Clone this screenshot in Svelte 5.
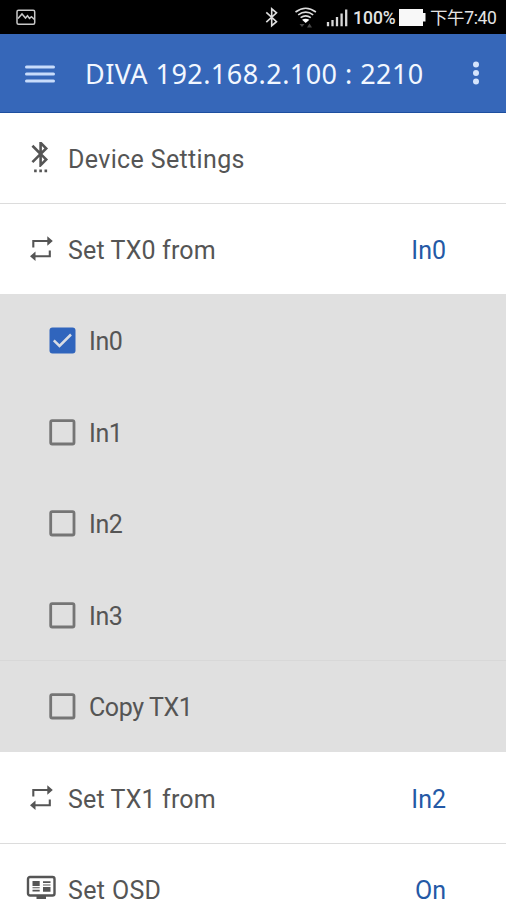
<script lang="ts">
    let title = 'DIVA 192.168.2.100 : 2210';
    let source = 'In0';

    const options = ['In0', 'In1', 'In2', 'In3', 'Copy TX1'];

    const selectSource = (name: string) => {
        source = name;
    };
</script>

<style>
    :global(body) {
        margin: 0;
        background: #fff;
    }
    .screen {
        width: 506px;
        height: 900px;
        overflow: hidden;
        background: #fff;
        color: #555;
        font-family: Roboto, sans-serif;
        font-size: 25px;
    }
    svg {
        display: block;
        flex: none;
    }
    button {
        border: 0;
        padding: 0;
        background: none;
        font: inherit;
        color: inherit;
        text-align: left;
        cursor: pointer;
    }
    .status {
        display: flex;
        align-items: center;
        justify-content: space-between;
        height: 34px;
        background: #000;
        color: #e4e4e4;
    }
    .status-text {
        font: 500 17.5px/34px Roboto, "Noto Sans CJK TC", sans-serif;
        white-space: nowrap;
        padding-top: 1px;
        height: 33px;
    }
    .percent {
        width: 44px;
        margin-left: 3px;
    }
    .clock {
        width: 66px;
        margin-left: 4px;
        font-weight: 400;
        letter-spacing: -0.4px;
    }
    .status-right {
        display: flex;
        align-items: center;
        padding-right: 10px;
    }
    .toolbar {
        display: flex;
        align-items: center;
        height: 78px;
        background: #3667b9;
        border-bottom: 1px solid #1d4f9f;
        color: #f2f7ff;
    }
    h1 {
        flex: 1;
        margin: 0;
        padding-top: 1px;
        font: 400 27px/36px "Noto Sans", sans-serif;
        letter-spacing: 0.45px;
        white-space: nowrap;
    }
    .menu {
        margin: 2px 30px 0 25px;
    }
    .more {
        margin-right: 24px;
    }
    .row {
        display: flex;
        align-items: center;
        box-sizing: border-box;
        height: 91px;
        padding: 0 60px 0 25px;
    }
    .row svg {
        margin-right: 11px;
    }
    .divided {
        border-bottom: 1px solid #dcdcdc;
    }
    .expanded {
        height: 90px;
    }
    .tall {
        height: 92px;
    }
    .last {
        height: 89px;
    }
    .label {
        flex: 1;
        line-height: 20px;
        padding-top: 4px;
        letter-spacing: 0.35px;
        white-space: nowrap;
    }
    .tight {
        letter-spacing: 0.15px;
    }
    .value {
        padding-top: 4px;
        line-height: 20px;
        color: #2459a6;
    }
    .last .label, .last .value {
        padding-top: 5px;
        line-height: 18px;
    }
    .last svg {
        margin-bottom: 1px;
    }
    .options {
        display: grid;
        grid-template-rows: repeat(5, 1fr);
        height: 458px;
        background: #e0e0e0;
    }
    .option {
        display: flex;
        align-items: center;
        gap: 13px;
        padding: 2px 0 0 49px;
    }
    .option .label {
        padding-top: 3px;
        letter-spacing: -0.4px;
    }
    .option:last-child {
        padding-top: 0;
        border-top: 1px solid #d8d8d8;
    }
</style>

{#snippet swapIcon()}
    <svg width="32" height="32" viewBox="0 0 32 32">
        <path d="M8.3 14.5V8H24M24.8 17.5v5.8H9" fill="none" stroke="#555" stroke-width="2.1" />
        <path d="M22.3 3.2l5.5 4.8-5.5 4.8zM10.5 18.5l-5.5 4.8 5.5 4.8z" fill="#555" />
    </svg>
{/snippet}

<div class="screen">
    <div class="status">
        <svg width="40" height="34" viewBox="0 0 40 34" fill="none" stroke="#c9c9c9" stroke-width="1.5">
            <rect x="17" y="10.2" width="17.7" height="14" rx="1.5" />
            <path d="M18 18.5l4-4.5 3.5 4 2-2.3 2 2.7 2-1.7 3 2.8" />
        </svg>
        <div class="status-right">
            <svg width="87" height="34" viewBox="263 0 87 34">
                <path d="M266.3 12.3l10.2 9.4-4.8 4V8.8l4.8 4-10.2 9.4" fill="none" stroke="#dedede" stroke-width="1.6" />
                <g fill="none" stroke="#dedede" stroke-width="1.6">
                    <path d="M295.5 12q10.2-7.6 20.4 0M298.2 14.8q7.5-5.3 15 0M300.6 17.6q5.1-3.4 10.2 0" />
                </g>
                <path d="M302 19.8q3.6-2 7.4 0l-3.7 3.2z" fill="#fff" />
                <path d="M299.5 24h5l-2.5 3zM307 27.5h5l-2.5-4z" fill="#484848" />
                <path d="M328 22v4.3M332.5 20v6.3M337 17v9.3M341.6 13.5v12.8M346.2 9.5v16.8" stroke="#d8d8d8" stroke-width="2.3" />
            </svg>
            <span class="status-text percent">100%</span>
            <svg width="29" height="34" viewBox="397 0 29 34">
                <path d="M399 9h24v4h2.5v8.5H423V26h-24z" fill="#f8f8f8" />
            </svg>
            <span class="status-text clock">下午7:40</span>
        </div>
    </div>

    <div class="toolbar">
        <svg class="menu" width="30" height="20" viewBox="0 0 30 20">
            <path d="M1.5 3h27M1.5 10h27M1.5 17h27" stroke="#c8dcfb" stroke-width="3" stroke-linecap="round" />
        </svg>
        <h1>{title}</h1>
        <svg class="more" width="12" height="26" viewBox="0 0 12 26" fill="#d5e4fc">
            <circle cx="6" cy="4.6" r="3" />
            <circle cx="6" cy="13" r="3" />
            <circle cx="6" cy="21.4" r="3" />
        </svg>
    </div>

    <div class="row divided">
        <svg width="32" height="32" viewBox="0 0.8 24.6 24.6" fill="#555">
            <path d="M11 24h2v-2h-2v2zm-4 0h2v-2H7v2zm8 0h2v-2h-2v2zm2.71-18.29L12 0h-1v7.59L6.41 3 5 4.41 10.59 10 5 15.59 6.41 17 11 12.41V20h1l5.71-5.71-4.3-4.29 4.3-4.29zM13 3.83l1.88 1.88L13 7.59V3.83zm1.88 10.46L13 16.17v-3.76l1.88 1.88z" overflow="visible" />
        </svg>
        <span class="label">Device Settings</span>
    </div>

    <div class="row expanded">
        {@render swapIcon()}
        <span class="label tight">Set TX0 from</span>
        <span class="value">{source}</span>
    </div>

    <div class="options">
        {#each options as option (option)}
            <button class="option" onclick={() => selectSource(option)}>
                <svg width="27" height="27" viewBox="0 0 27 27" fill="none">
                    {#if option === source}
                        <rect x="0.5" y="0.5" width="26" height="26" rx="3" fill="#3065bd" />
                        <path d="M4.8 13.3l5.7 5.7L22 7.5" stroke="#d9dde4" stroke-width="2.5" />
                    {:else}
                        <rect x="1.7" y="1.7" width="23.3" height="23.3" rx="1.5" stroke="#757575" stroke-width="2.8" />
                    {/if}
                </svg>
                <span class="label">{option}</span>
            </button>
        {/each}
    </div>

    <div class="row divided tall">
        {@render swapIcon()}
        <span class="label tight">Set TX1 from</span>
        <span class="value">In2</span>
    </div>

    <div class="row last">
        <svg width="32" height="32" viewBox="0 0 32 32" fill="#555">
            <rect x="3" y="5" width="26.5" height="18.5" rx="2" fill="none" stroke="#555" stroke-width="2.4" />
            <path d="M11.5 24h9.5v3h-9.5zM7.5 9h7.2v5H7.5zM18 9.2h7.5V11H18zM18 12.4h7.5v1.2H18zM7.5 17.8h7.2v1.8H7.5zM7.5 15.2h7.2v1H7.5zM18 15h7.5v4.8H18z" />
        </svg>
        <span class="label">Set OSD</span>
        <span class="value">On</span>
    </div>
</div>
